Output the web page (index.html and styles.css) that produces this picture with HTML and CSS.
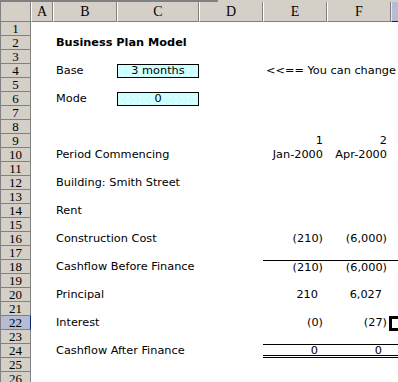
FILE: index.html
```html
<!DOCTYPE html>
<html lang="en">
<head>
  <meta charset="UTF-8">
  <title>Business Plan Model</title>
  <link rel="stylesheet" href="styles.css">
</head>
<body>
  <div class="sheet">
    <div class="topline"></div>

    <!-- column headers -->
    <div class="row colheads">
      <div class="corner"></div>
      <div class="ch">A</div>
      <div class="ch">B</div>
      <div class="ch">C</div>
      <div class="ch">D</div>
      <div class="ch">E</div>
      <div class="ch">F</div>
      <div class="ch sel">G</div>
    </div>

    <div class="row"><div class="rh">1</div></div>
    <div class="row"><div class="rh">2</div><div class="cell b title">Business Plan Model</div></div>
    <div class="row"><div class="rh">3</div></div>
    <div class="row">
      <div class="rh">4</div>
      <div class="cell b">Base</div>
      <div class="cell c input">3 months</div>
      <div class="cell e">&lt;&lt;== You can change</div>
    </div>
    <div class="row"><div class="rh">5</div></div>
    <div class="row">
      <div class="rh">6</div>
      <div class="cell b">Mode</div>
      <div class="cell c input">0</div>
    </div>
    <div class="row"><div class="rh">7</div></div>
    <div class="row"><div class="rh">8</div></div>
    <div class="row">
      <div class="rh">9</div>
      <div class="cell e num">1</div>
      <div class="cell f num">2</div>
    </div>
    <div class="row">
      <div class="rh">10</div>
      <div class="cell b">Period Commencing</div>
      <div class="cell e num">Jan-2000</div>
      <div class="cell f num">Apr-2000</div>
    </div>
    <div class="row"><div class="rh">11</div></div>
    <div class="row"><div class="rh">12</div><div class="cell b">Building: Smith Street</div></div>
    <div class="row"><div class="rh">13</div></div>
    <div class="row"><div class="rh">14</div><div class="cell b">Rent</div></div>
    <div class="row"><div class="rh">15</div></div>
    <div class="row">
      <div class="rh">16</div>
      <div class="cell b">Construction Cost</div>
      <div class="cell e num">(210)</div>
      <div class="cell f num">(6,000)</div>
    </div>
    <div class="row"><div class="rh">17</div></div>
    <div class="row">
      <div class="rh">18</div>
      <div class="cell b">Cashflow Before Finance</div>
      <div class="cell e num total">(210)</div>
      <div class="cell f num total">(6,000)</div>
      <div class="cell g total"></div>
    </div>
    <div class="row"><div class="rh">19</div></div>
    <div class="row">
      <div class="rh">20</div>
      <div class="cell b">Principal</div>
      <div class="cell e num pos">210</div>
      <div class="cell f num pos">6,027</div>
    </div>
    <div class="row"><div class="rh">21</div></div>
    <div class="row">
      <div class="rh sel">22</div>
      <div class="cell b">Interest</div>
      <div class="cell e num">(0)</div>
      <div class="cell f num">(27)</div>
      <div class="cell g active"></div>
    </div>
    <div class="row"><div class="rh">23</div></div>
    <div class="row">
      <div class="rh">24</div>
      <div class="cell b">Cashflow After Finance</div>
      <div class="cell e num pos total final">0</div>
      <div class="cell f num pos total final">0</div>
      <div class="cell g total final"></div>
    </div>
    <div class="row"><div class="rh">25</div></div>
    <div class="row"><div class="rh">26</div></div>
  </div>
</body>
</html>
```

FILE: styles.css
```css
body {
  margin: 0;
  width: 398px;
  height: 382px;
  overflow: hidden;
  background: #fff;
  font-family: "DejaVu Sans", Verdana, sans-serif;
  font-size: 11.3px;
  color: #000;
}
.sheet {
  width: 398px;
  overflow: hidden;
}
.topline {
  height: 2px;
  background: linear-gradient(to right, #808080 218px, #d4d0c8 218px);
}

/* grid rows */
.row {
  display: grid;
  grid-template-columns: 31px 22px 64px 82px 64px 64px 64px 64px;
  height: 14px;
}
.colheads {
  height: 20px;
}

/* headers */
.corner, .ch, .rh {
  box-sizing: border-box;
  background: #d4d0c8;
  font-family: "Liberation Serif", "Times New Roman", serif;
  color: #000;
  text-align: center;
}
.corner {
  border-right: 1px solid #808080;
  border-bottom: 1px solid #808080;
  border-left: 1px solid #808080;
}
.ch {
  font-size: 14px;
  line-height: 19px;
  border-right: 1px solid #808080;
  border-bottom: 1px solid #808080;
  border-left: 1px solid #fff;
}
.ch.sel {
  background: #b6bdd2;
  border-bottom-color: #0a246a;
  border-left-color: #e6e8f0;
}
.rh {
  font-size: 13px;
  line-height: 13px;
  border-left: 1px solid #808080;
  border-right: 1px solid #808080;
  border-bottom: 1px solid #808080;
}
.rh.sel {
  background: #b6bdd2;
  border-right-color: #0a246a;
}

/* cells */
.cell {
  grid-row: 1;
  box-sizing: border-box;
  height: 14px;
  line-height: 14px;
  padding: 0 3px;
  white-space: nowrap;
}
.b { grid-column: 3; }
.c { grid-column: 4; }
.e { grid-column: 6; }
.f { grid-column: 7; }
.g { grid-column: 8; }

.title {
  font-weight: bold;
}
.input {
  border: 1px solid #000;
  line-height: 12px;
  text-align: center;
  background-color: #ccffff;
  background-image: radial-gradient(circle, #eefefe 0.7px, transparent 0.8px);
  background-size: 6px 6px;
  background-position: 1px 1px;
}
.num {
  text-align: right;
  padding-right: 4px;
}
.num.pos {
  padding-right: 9px;
}
.total {
  border-top: 1px solid #000;
  line-height: 13px;
}
.total.final {
  border-bottom: 3px double #000;
  line-height: 12px;
}

/* selected cell outline */
.active {
  position: relative;
}
.active::after {
  content: "";
  position: absolute;
  left: -2px;
  top: 0;
  right: -2px;
  bottom: -1px;
  border: 3px solid #000;
}
```
